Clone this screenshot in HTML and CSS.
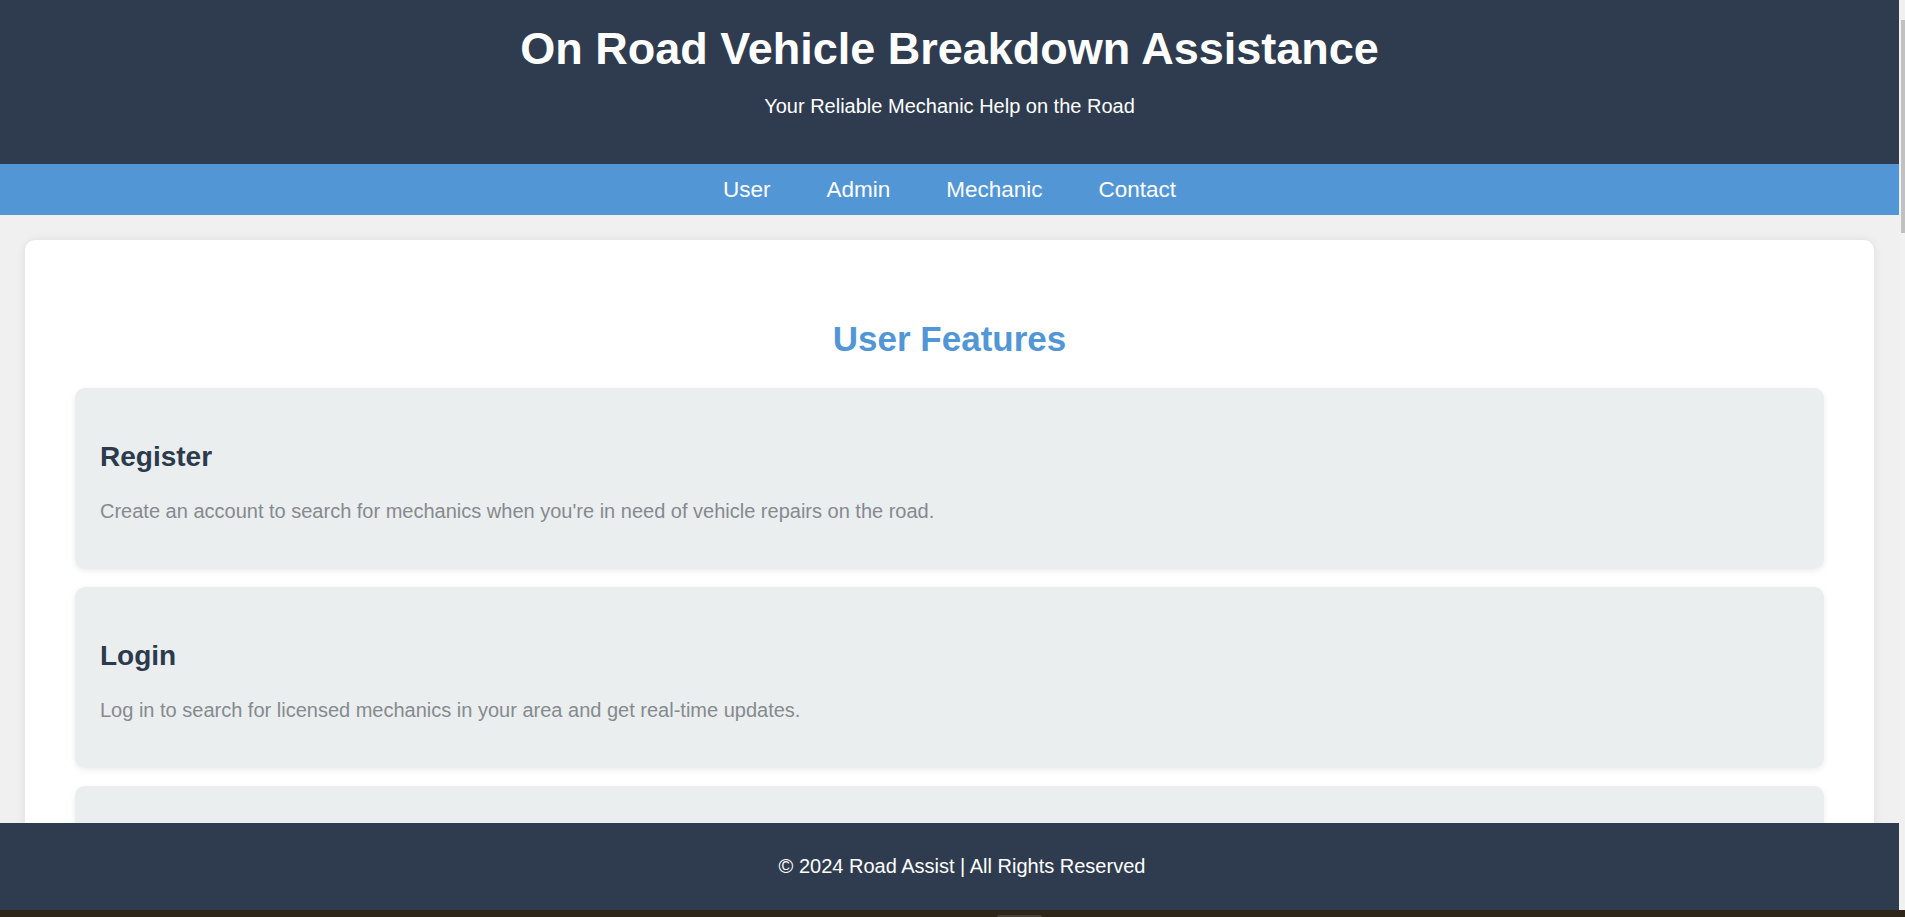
FILE: index.html
```html
<!DOCTYPE html>
<html lang="en">
<head>
<meta charset="utf-8">
<title>On Road Vehicle Breakdown Assistance</title>
<link rel="stylesheet" href="styles.css">
</head>
<body>
<div class="page">
  <header class="site-header">
    <h1 class="site-title">On Road Vehicle Breakdown Assistance</h1>
    <p class="site-tagline">Your Reliable Mechanic Help on the Road</p>
  </header>
  <nav class="site-nav">
    <a href="#" class="nav-link">User</a>
    <a href="#" class="nav-link">Admin</a>
    <a href="#" class="nav-link">Mechanic</a>
    <a href="#" class="nav-link">Contact</a>
  </nav>
  <main class="content-card">
    <h2 class="section-title">User Features</h2>
    <div class="feature">
      <h3 class="feature-title">Register</h3>
      <p class="feature-text">Create an account to search for mechanics when you're in need of vehicle repairs on the road.</p>
    </div>
    <div class="feature">
      <h3 class="feature-title">Login</h3>
      <p class="feature-text">Log in to search for licensed mechanics in your area and get real-time updates.</p>
    </div>
    <div class="feature">
      <h3 class="feature-title">Search Mechanics</h3>
      <p class="feature-text">Find nearby mechanics and request assistance for your vehicle breakdown.</p>
    </div>
  </main>
</div>
<footer class="site-footer">© 2024 Road Assist | All Rights Reserved</footer>
<div class="scroll-track"><div class="scroll-thumb"></div></div>
<div class="taskbar"><div class="taskbar-item"></div></div>
</body>
</html>
```
FILE: styles.css
```css
html, body {
  margin: 0;
  padding: 0;
  overflow: hidden;
  height: 100%;
}
body {
  background: #f0f0f0;
  font-family: "Liberation Sans", Arial, sans-serif;
}
.page {
  margin-right: 6px;
}
.site-header {
  background: #2f3c4f;
  color: #ffffff;
  text-align: center;
  padding: 23px 0 46px;
}
.site-title {
  margin: 0 0 20px;
  font-size: 45px;
  line-height: 52px;
  font-weight: bold;
}
.site-tagline {
  margin: 0;
  font-size: 20px;
  line-height: 23px;
}
.site-nav {
  background: #5296d5;
  height: 51px;
  display: flex;
  justify-content: center;
  align-items: center;
  gap: 56px;
}
.nav-link {
  color: #ffffff;
  text-decoration: none;
  font-size: 22.5px;
  line-height: 26px;
}
.content-card {
  display: block;
  background: #ffffff;
  margin: 25px 25px 0;
  padding: 50px 50px 50px;
  border-radius: 10px;
  box-shadow: 0 0 10px rgba(0, 0, 0, 0.08);
}
.section-title {
  margin: 29px 0 29px;
  text-align: center;
  color: #5296d5;
  font-size: 35px;
  line-height: 40px;
  font-weight: bold;
}
.feature {
  background: #ebeeef;
  border-radius: 10px;
  padding: 25px;
  margin-bottom: 18px;
  box-shadow: 0 2px 6px rgba(0, 0, 0, 0.08);
}
.feature-title {
  margin: 28px 0 27px;
  color: #2c3a4e;
  font-size: 28px;
  line-height: 32px;
  font-weight: bold;
}
.feature-text {
  margin: 0 0 21px;
  color: #858a8e;
  font-size: 20px;
  line-height: 23px;
}
.site-footer {
  position: fixed;
  left: 0;
  right: 6px;
  bottom: 7px;
  height: 87px;
  padding-left: 25px;
  background: #2f3c4f;
  color: #ffffff;
  font-size: 20px;
  display: flex;
  align-items: center;
  justify-content: center;
}
.scroll-track {
  position: fixed;
  top: 0;
  right: 0;
  bottom: 7px;
  width: 6px;
  background: #f1f1f1;
}
.scroll-thumb {
  position: absolute;
  top: 20px;
  right: 0;
  width: 4px;
  height: 213px;
  background: #c1c1c1;
}
.taskbar {
  position: fixed;
  left: 0;
  right: 0;
  bottom: 0;
  height: 7px;
  background: #2e2619;
}
.taskbar-item {
  position: absolute;
  left: 997px;
  bottom: 0;
  width: 45px;
  height: 2px;
  border-radius: 3px 3px 0 0;
  background: #4a4236;
}
```
